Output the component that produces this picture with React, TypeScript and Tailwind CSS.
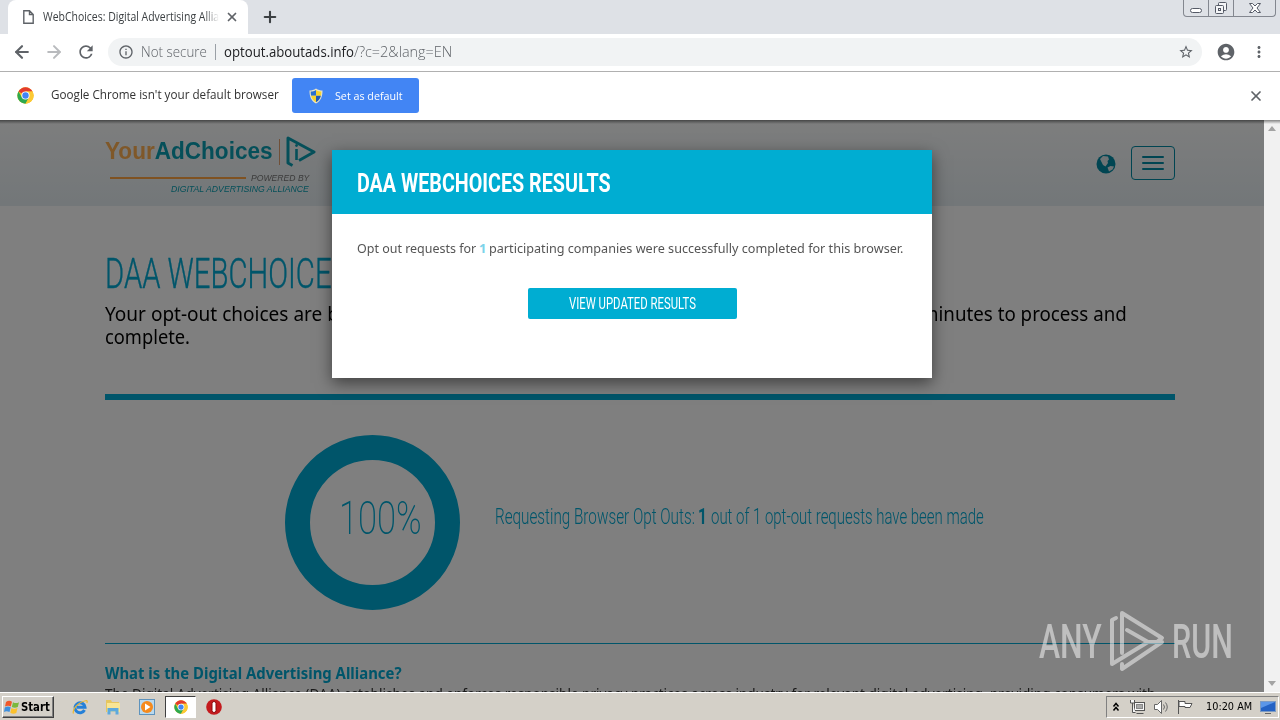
import { useLayoutEffect, useRef, useState } from 'react';
import type { ReactNode } from 'react';
import { ArrowLeft, ArrowRight, Plus, X } from 'lucide-react';
import { MdAccountCircle, MdInfoOutline, MdMoreVert, MdRefresh, MdStarBorder } from 'react-icons/md';

interface FitProps {
  width: number;
  className?: string;
  children: ReactNode;
}

// Single line of text squeezed or stretched horizontally to a given width
function Fit({ width, className = '', children }: FitProps) {
  const ref = useRef<HTMLSpanElement>(null);
  const [scale, setScale] = useState(1);

  useLayoutEffect(() => {
    if (ref.current) setScale(width / ref.current.offsetWidth);
  }, [width]);

  return (
    <span className={`block shrink-0 ${className}`} style={{ width }}>
      <span
        ref={ref}
        className="block w-max origin-left whitespace-pre"
        style={{ transform: `scaleX(${scale})` }}
      >
        {children}
      </span>
    </span>
  );
}

function ChromeLogo({ className }: { className: string }) {
  return (
    <svg viewBox="0 0 48 48" className={className}>
      <circle cx="24" cy="24" r="23" fill="#fbc116" />
      <path d="M24 24 4.1 12.5A23 23 0 0 1 43.9 12.5H24z" fill="#e33b2e" />
      <path d="M4.1 12.5A23 23 0 0 0 24 47l10-17.3L24 24 14 29.7z" fill="#2da94f" />
      <path d="M24 12.5h19.9A23 23 0 0 1 24 47l10-17.3z" fill="#fcc934" />
      <circle cx="24" cy="24" r="11.5" fill="#fff" />
      <circle cx="24" cy="24" r="9" fill="#4285f4" />
    </svg>
  );
}

function ShieldIcon() {
  return (
    <svg viewBox="0 0 16 16" className="h-4 w-4">
      <path d="M8 .5C6 2 3.5 2.5 1.5 2.5 1.5 8.5 3 13 8 15.5 13 13 14.5 8.5 14.5 2.5 12.5 2.5 10 2 8 .5z" fill="#e8e4c8" />
      <path d="M8 2C6.5 3 4.5 3.5 2.7 3.6c0 1.5.1 2.9.4 4.2H8z" fill="#2a6fd0" />
      <path d="M8 2c1.500 1 3.500 1.500 5.300 1.600 0 1.500-.1 2.900-.4 4.200H8z" fill="#f8d32c" />
      <path d="M3.100 7.800H8v6.500c-2.700-1.400-4.200-3.600-4.900-6.500z" fill="#f8d32c" />
      <path d="M12.900 7.800H8v6.500c2.700-1.400 4.200-3.600 4.900-6.500z" fill="#2159b4" />
    </svg>
  );
}

function TabStrip() {
  return (
    <div className="flex h-[34px] shrink-0 bg-[#dee1e6]">
      <div className="ml-2 flex w-[240px] items-center rounded-t-lg bg-white pl-[15px]">
        <svg viewBox="0 0 11 14" className="h-[14px] w-[11px]" fill="none" stroke="#5f6368" strokeWidth="1.4">
          <path d="M.8.8h5.700l3.700 3.700v8.700H.8zM6.500.8v3.700h3.700" />
        </svg>
        <div className="ml-[9px] w-[176px] overflow-hidden [mask-image:linear-gradient(to_right,black_92%,transparent)]">
          <Fit width={176} className="text-[12px] text-[#3c4043]">WebChoices: Digital Advertising Allia</Fit>
        </div>
        <X className="ml-[6px] h-[14px] w-[14px] text-[#5f6368]" strokeWidth={3} />
      </div>
      <Plus className="ml-[13px] mt-2 h-[18px] w-[18px] text-[#3c4043]" strokeWidth={2.8} />
      <div className="ml-auto mr-1 flex h-[17px] w-[93px] rounded-b border border-t-0 border-[#83878f]">
        <div className="flex w-[25px] justify-center border-r border-[#83878f]">
          <div className="mt-2 h-[5px] w-3 rounded-sm border border-[#555a66] bg-white" />
        </div>
        <div className="flex w-[25px] justify-center border-r border-[#83878f]">
          <svg viewBox="0 0 14 14" className="mt-[1px] h-[14px] w-[14px]" fill="#f4f5f7" stroke="#555a66">
            <rect x="4.5" y="1.5" width="8" height="8" rx="1" />
            <rect x="1.5" y="4.5" width="8" height="8" rx="1" />
            <rect x="4.5" y="7.5" width="2" height="2" />
          </svg>
        </div>
        <div className="flex flex-1 justify-center">
          <svg viewBox="0 0 14 12" className="mt-[2px] h-3 w-[14px]" fill="#fff" stroke="#555a66">
            <path d="M1.5 1.5h3L7 4l2.500-2.500h3L9 6l3.500 4.500h-3L7 8l-2.500 2.500h-3L5 6z" />
          </svg>
        </div>
      </div>
    </div>
  );
}

function Toolbar() {
  return (
    <div className="flex h-[38px] shrink-0 items-center border-b border-[#b0b0b0] bg-white pb-px text-[#5f6368]">
      <ArrowLeft className="ml-3 h-5 w-5" strokeWidth={2.6} />
      <ArrowRight className="ml-3 h-5 w-5 text-[#b9bbbe]" strokeWidth={2.4} />
      <MdRefresh className="ml-[12px] h-5 w-5" />
      <div className="ml-3 flex h-7 w-[1094px] items-center rounded-full bg-[#f1f3f4] pl-[10px] text-[14px] leading-5">
        <MdInfoOutline className="h-4 w-4" />
        <Fit width={66} className="ml-[7px] font-light">Not secure</Fit>
        <div className="ml-2 h-4 w-px bg-[#9aa0a6]" />
        <Fit width={130} className="ml-2 text-[#202124]">optout.aboutads.info</Fit>
        <Fit width={98} className="font-light">/?c=2&amp;lang=EN</Fit>
        <MdStarBorder className="ml-auto mr-2 h-4 w-4" />
      </div>
      <MdAccountCircle className="ml-[14px] h-5 w-5" />
      <MdMoreVert className="ml-[14px] h-[18px] w-[18px]" />
    </div>
  );
}

function DefaultBrowserBar() {
  return (
    <div className="flex h-12 shrink-0 items-center bg-white pb-px pl-[17px]">
      <ChromeLogo className="h-[17px] w-[17px]" />
      <Fit width={228} className="ml-[17px] text-[12.5px] text-[#333]">Google Chrome isn't your default browser</Fit>
      <button className="ml-[13px] flex h-[35px] w-[127px] items-center rounded-[3px] bg-[#4285f4] pl-4 text-white">
        <ShieldIcon />
        <Fit width={68} className="ml-[11px] text-left text-[11.5px]">Set as default</Fit>
      </button>
      <X className="ml-auto mr-4 h-4 w-4 text-[#5f6368]" strokeWidth={2.6} />
    </div>
  );
}

function SiteHeader() {
  return (
    <header className="flex h-[86px] bg-linear-to-b from-[#fbfcfc] to-[#e6eef2] pl-[105px] pr-[89px] font-['Liberation_Sans']">
      <div className="w-[212px] pt-4">
        <div className="flex h-[32px]">
          <Fit width={168} className="text-[23.5px] leading-[31px] font-bold text-[#0a9fb2]">
            <span className="text-[#ffb052]">Your</span>AdChoices
          </Fit>
          <div className="ml-[6px] mt-[3px] h-[26px] w-px bg-[#e0a070]" />
          <svg viewBox="0 0 30 32" className="ml-[6px] h-8 w-[30px]" fill="none" stroke="#0a9fb2" strokeWidth="3" strokeLinejoin="round">
            <path d="M6.5 29.500 2 27V2l26 14-15 8.500" />
            <path d="M10.500 13v11" strokeWidth="2.6" />
            <circle cx="10.5" cy="9.5" r="1" fill="#0a9fb2" strokeWidth="1" />
          </svg>
        </div>
        <div className="mt-1 flex h-[11px] items-center">
          <div className="ml-[5px] h-[2px] w-[136px] bg-[#ffa544]" />
          <Fit width={58} className="ml-[5px] text-[9.5px] leading-[11px] text-[#777] italic">POWERED BY</Fit>
        </div>
        <Fit width={138} className="ml-[66px] text-[9.5px] leading-[11px] text-[#0a9fb2] italic">DIGITAL ADVERTISING ALLIANCE</Fit>
      </div>
      <svg viewBox="0 0 20 20" className="ml-auto mt-[34px] h-5 w-5">
        <circle cx="10" cy="10" r="9.5" fill="#008aa4" />
        <path d="m4 5 3-3 5 .5 1 3-1.500 1.500.5 2-2.500 3.500L7 11 5.500 8z" fill="#dce6ea" />
        <path d="m11.500 13.500 3-1.500 3.500.5-1.500 3-3.500 2z" fill="#dce6ea" />
      </svg>
      <button className="mt-[26px] ml-[15px] flex h-[34px] w-11 flex-col items-center justify-center gap-1 rounded-[4px] border border-[#008aa4]">
        <span className="h-[2px] w-[22px] rounded bg-[#008aa4]" />
        <span className="h-[2px] w-[22px] rounded bg-[#008aa4]" />
        <span className="h-[2px] w-[22px] rounded bg-[#008aa4]" />
      </button>
    </header>
  );
}

function ResultsPage() {
  return (
    <main className="px-[105px] font-['Noto_Sans']">
      <Fit width={244} className="pt-[42px] font-['Roboto'] text-[42px] leading-[52px] font-light text-[#00aad4] [-webkit-text-stroke:0.4px]">DAA WEBCHOICES</Fit>
      <div className="flex pt-[2px] text-[20px] leading-[23px] text-black">
        <Fit width={234}>Your opt-out choices are b</Fit>
        <Fit width={206} className="ml-[582px]">minutes to process and</Fit>
      </div>
      <Fit width={85} className="text-[20px] leading-[23px] text-black">complete.</Fit>
      <div className="mt-[46px] h-[6px] w-[1070px] bg-[#00aad4]" />
      <div className="mt-[35px] flex h-[175px] pl-[180px] font-['Roboto'] text-[#00aad4]">
        <div className="h-[175px] w-[175px] rounded-full border-[25px] border-[#00aad4]">
          <Fit width={83} className="mt-[29px] ml-[29px] text-[47px] leading-[58px] font-extralight">100%</Fit>
        </div>
        <div className="mt-[66px] ml-[35px] flex text-[22.5px] leading-[30px] font-light">
          <Fit width={200}>Requesting Browser Opt Outs:</Fit>
          <Fit width={9} className="ml-[3px] font-bold">1</Fit>
          <Fit width={273} className="ml-1">out of 1 opt-out requests have been made</Fit>
        </div>
      </div>
      <div className="mt-[33px] h-px w-[1070px] bg-[#00aad4]" />
      <Fit width={297} className="mt-[18px] text-[16px] leading-[23px] font-bold text-[#00aad4]">What is the Digital Advertising Alliance?</Fit>
      <Fit width={1050} className="text-[15px] leading-[16px] text-[#333]">
        The Digital Advertising Alliance (DAA) establishes and enforces responsible privacy practices across industry for relevant digital advertising, providing consumers with
      </Fit>
    </main>
  );
}

function ResultsDialog() {
  return (
    <div className="absolute top-[30px] left-[332px] flex h-[228px] w-[600px] flex-col bg-white shadow-[0_5px_15px_rgba(0,0,0,0.5)]">
      <div className="flex h-16 items-center bg-[#00add2] pl-[25px] pt-[2px] text-white">
        <Fit width={254} className="font-['Roboto'] text-[26px] leading-[34px] font-bold">DAA WEBCHOICES RESULTS</Fit>
      </div>
      <div className="mt-6 flex pl-[25px] font-['Noto_Sans'] text-[13px] leading-5 text-[#555]">
        <Fit width={119}>Opt out requests for</Fit>
        <Fit width={7} className="mx-[3px] font-bold text-[#7cd3ea]">1</Fit>
        <Fit width={414}>participating companies were successfully completed for this browser.</Fit>
      </div>
      <button className="mt-[30px] ml-[196px] flex h-[31px] w-[209px] items-center rounded-[2px] bg-[#00add2] pl-[41px] text-white">
        <Fit width={127} className="font-['Roboto'] text-[16.5px] leading-[24px]">VIEW UPDATED RESULTS</Fit>
      </button>
    </div>
  );
}

function Watermark() {
  return (
    <div className="absolute top-[489px] left-[1039px] flex h-[64px] items-center font-['Roboto'] text-[49px] leading-[66px] text-white/50">
      <Fit width={63} className="pt-[2px] font-medium">ANY</Fit>
      <svg viewBox="0 0 56 64" className="mx-[7px] h-16 w-14" fill="none" stroke="currentColor" strokeWidth="4" strokeLinejoin="round" strokeLinecap="round">
        <path d="M7 9 3 11v44l36-22-21-12M13 44V4l40 25-4 3M40 33h13L13 60v-5" />
      </svg>
      <Fit width={61} className="pt-[2px] font-medium">RUN</Fit>
    </div>
  );
}

function Scrollbar() {
  return (
    <div className="flex w-4 flex-col items-center justify-between bg-[#f1f1f1] py-[6px]">
      <div className="border-x-4 border-b-[5px] border-x-transparent border-b-[#a3a3a3]" />
      <div className="border-x-4 border-t-[5px] border-x-transparent border-t-[#a3a3a3]" />
    </div>
  );
}

function Taskbar() {
  return (
    <div className="flex h-7 shrink-0 items-center border-t border-white bg-[#d4d0c8] font-['DejaVu_Sans'] text-black">
      <div className="ml-[2px] flex h-[22px] w-[52px] items-center border border-white border-r-[#404040] border-b-[#404040] shadow-[inset_-1px_-1px_#808080]">
        <svg viewBox="0 0 16 16" className="ml-[1px] h-4 w-4">
          <path d="M2 3c2-1.500 4-1.500 6-.3L6.800 7.500C5 6.300 3 6.400 1 7.500z" fill="#f0582a" />
          <path d="M9 3.200c2 1.200 4 1.200 6 0L13.800 8c-2 1.100-4 1-6 0z" fill="#7bb83c" />
          <path d="M.8 8.500c2-1.300 4-1.300 5.900-.2l-1.200 4.800c-2-1.200-4-1.200-5.500 0z" fill="#3e8fdd" />
          <path d="M7.500 9c2 1.200 4 1.200 6 .1l-1.200 4.800c-2 1.200-4 1-6-.1z" fill="#fbc12d" />
        </svg>
        <Fit width={29} className="ml-[1px] pt-px text-[11.5px] leading-4 font-bold">Start</Fit>
      </div>
      <svg viewBox="0 0 16 16" className="ml-[18px] h-4 w-4" fill="none">
        <path d="M12.500 11A5 5 0 1 1 13 8.200H5" stroke="#2580d8" strokeWidth="3" />
        <path d="M1.500 14.500C0 11 5 3.500 14.500 1.500c1 .2.8 1.500.3 2.500" stroke="#ecb832" strokeWidth="1.2" />
      </svg>
      <svg viewBox="0 0 16 16" className="ml-[17px] h-4 w-4">
        <path d="M1 1h5l1 2h7v10H1z" fill="#e6c65f" />
        <path d="M2 4h13v9H2z" fill="#f8e594" />
        <path d="M2.500 15.500V9h11v6.500h-3v-3h-5v3z" fill="#5ca9dd" />
      </svg>
      <svg viewBox="0 0 16 16" className="ml-[18px] h-4 w-4">
        <rect x=".5" y=".5" width="15" height="15" fill="#b9d9ee" stroke="#5e93bd" />
        <circle cx="8" cy="8" r="6" fill="#f58a1d" />
        <path d="M6 4.500 11.500 8 6 11.500z" fill="#fff" />
      </svg>
      <div className="ml-[10px] flex h-[22px] w-[31px] items-center justify-center border border-[#404040] border-r-white border-b-white bg-white">
        <ChromeLogo className="h-[14px] w-[14px]" />
      </div>
      <svg viewBox="0 0 16 16" className="ml-[10px] h-4 w-4">
        <circle cx="8" cy="8" r="7.8" fill="#c41a1d" />
        <rect x="6" y="2.500" width="4" height="11" rx="2" fill="#fff" stroke="#8b090c" />
      </svg>
      <div className="ml-auto mr-[1px] flex h-[22px] w-[173px] items-center border border-[#808080] border-r-white border-b-white">
        <svg viewBox="0 0 8 10" className="ml-[5px] h-[10px] w-2" fill="none" stroke="#000" strokeWidth="1.5">
          <path d="m1.500 4.500 2.500-3 2.500 3M1.500 8.500l2.500-3 2.500 3" />
        </svg>
        <svg viewBox="0 0 16 16" className="ml-[9px] h-4 w-4" fill="#f7f7f7" stroke="#555">
          <rect x="5.5" y="3.5" width="10" height="8" />
          <rect x="7.5" y="5.5" width="6" height="4" fill="#aaa" stroke="#888" />
          <path d="M7.500 14.500h7M1.500 1v3h4V1M3.500 4v9.500h3" />
        </svg>
        <svg viewBox="0 0 16 16" className="ml-2 h-4 w-4" fill="#fff" stroke="#666">
          <path d="M1.500 5.500h3l4-4v13l-4-4h-3z" />
          <path d="M10.500 5.500q2 2.500 0 5M12.500 3.500q3.500 4.500 0 9" fill="none" />
        </svg>
        <svg viewBox="0 0 16 16" className="ml-2 h-4 w-4" fill="#fff" stroke="#555">
          <path d="M1.500 1v14M2 2.500h6v2h7l-2 4H8v-1H2z" />
        </svg>
        <Fit width={46} className="ml-[13px] pt-px text-[11px]">10:20 AM</Fit>
        <svg viewBox="0 0 16 14" className="ml-2 h-[14px] w-4">
          <rect x=".5" y="1.5" width="15" height="10" fill="#2462c4" stroke="#7d9bc3" />
          <path d="M1 2h14L1 8z" fill="#5b96e8" />
          <path d="M5 13.500h6" stroke="#666" />
        </svg>
      </div>
    </div>
  );
}

export default function App() {
  return (
    <div className="flex h-[720px] w-[1280px] flex-col overflow-hidden bg-white font-['Open_Sans',sans-serif]">
      <TabStrip />
      <Toolbar />
      <DefaultBrowserBar />
      <div className="relative flex h-[572px] shrink-0 overflow-hidden">
        <div className="relative w-[1264px] overflow-hidden bg-white">
          <SiteHeader />
          <ResultsPage />
          <div className="absolute inset-0 bg-black/50" />
          <ResultsDialog />
          <Watermark />
        </div>
        <Scrollbar />
        <div className="absolute inset-x-0 top-0 h-1 bg-linear-to-b from-black/45 to-transparent" />
      </div>
      <Taskbar />
    </div>
  );
}
